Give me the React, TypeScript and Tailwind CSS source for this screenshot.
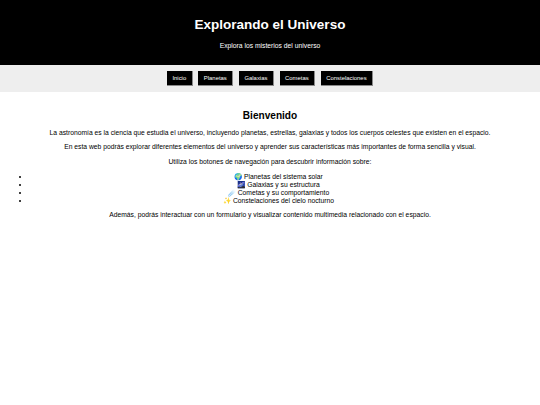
const navItems = ['Inicio', 'Planetas', 'Galaxias', 'Cometas', 'Constelaciones'];

const topics = [
  { icon: '🌍', text: 'Planetas del sistema solar' },
  { icon: '🌌', text: 'Galaxias y su estructura' },
  { icon: '☄️', text: 'Cometas y su comportamiento' },
  { icon: '✨', text: 'Constelaciones del cielo nocturno' },
];

export default function App() {
  return (
    <div className="min-h-[405px] bg-white font-['Liberation_Sans',Arial,sans-serif] text-black antialiased">
      <header className="h-[65px] bg-black pt-[16px] text-center text-white">
        <h1 className="text-[13.5px] leading-[18px] font-bold">Explorando el Universo</h1>
        <p className="mt-[7px] text-[6.75px] leading-[9px]">Explora los misterios del universo</p>
      </header>

      <nav className="flex h-[27px] items-start justify-center gap-[5.9px] bg-[#eeeeee] pt-[6px]">
        {navItems.map((item) => (
          <button
            key={item}
            className="h-[15px] border-r border-b border-[#8a8a8a] bg-black px-[5.4px] text-[5.9px] text-white"
          >
            {item}
          </button>
        ))}
      </nav>

      <main className="px-[8px] pt-[17px] text-center text-[6.75px] leading-[8px]">
        <h2 className="text-[10.1px] leading-[13px] font-bold">Bienvenido</h2>
        <p className="mt-[7px]">
          La astronomía es la ciencia que estudia el universo, incluyendo planetas, estrellas, galaxias y todos los cuerpos celestes que existen en el espacio.
        </p>
        <p className="mt-[6.2px]">
          En esta web podrás explorar diferentes elementos del universo y aprender sus características más importantes de forma sencilla y visual.
        </p>
        <p className="mt-[6.5px]">Utiliza los botones de navegación para descubrir información sobre:</p>
        <ul className="mt-[7px] pl-[17px]">
          {topics.map((t) => (
            <li
              key={t.text}
              className="relative before:absolute before:top-[3px] before:left-[-6px] before:size-[2px] before:rounded-full before:bg-black before:content-['']"
            >
              {t.icon} {t.text}
            </li>
          ))}
        </ul>
        <p className="mt-[6px]">
          Además, podrás interactuar con un formulario y visualizar contenido multimedia relacionado con el espacio.
        </p>
      </main>
    </div>
  );
}
